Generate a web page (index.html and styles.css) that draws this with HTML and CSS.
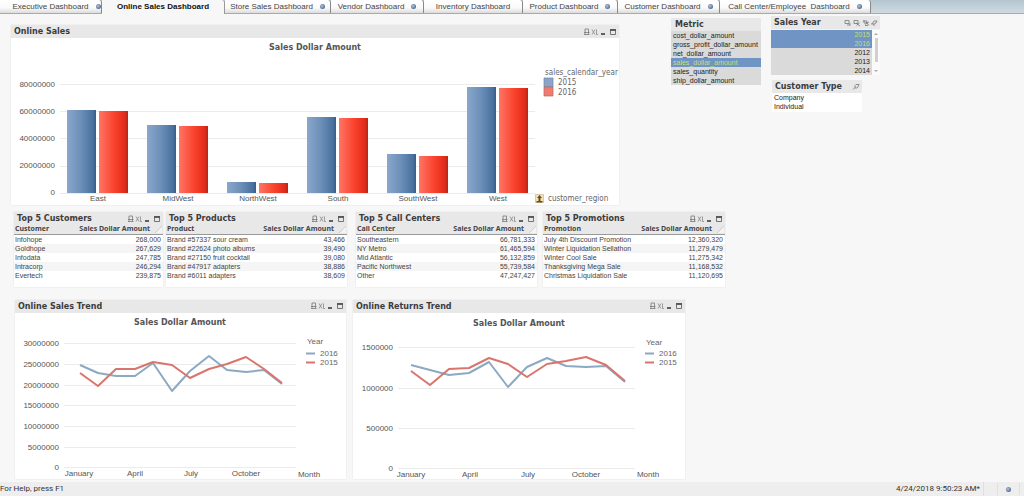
FILE: index.html
```
<!DOCTYPE html>
<html lang="en">
<head>
<meta charset="utf-8">
<title>Online Sales Dashboard</title>
<link rel="stylesheet" href="styles.css">
</head>
<body>
<svg class="sprite" aria-hidden="true">
  <symbol id="tools" viewBox="0 0 34 8">
    <path d="M2 4V1h3.500v3M1 4.500h5.500M1 6.500h5.500M2 4v2.500M5.500 4v2.500" fill="none" stroke="#777" stroke-width=".8"/>
    <path d="M9 1.500l3 5M12 1.500L9 6.500M13.500 1.500v5H15" fill="none" stroke="#888" stroke-width=".8"/>
    <path d="M18 6h4" stroke="#333" stroke-width="1.500"/>
    <path d="M27 2h6" stroke="#333" stroke-width="1.500"/>
    <path d="M27.500 1.500h5v5h-5z" fill="none" stroke="#555" stroke-width=".8"/>
  </symbol>
  <symbol id="search" viewBox="0 0 8 8">
    <path d="M1 6.500L3 4.500M3 2.500l1-1h3l-1 2.500-1.500 1H3z" fill="none" stroke="#777" stroke-width=".8"/>
  </symbol>
  <symbol id="yeartools" viewBox="0 0 34 8">
    <path d="M1 1.500h4v3H1zM3 6h3M6 4v2.500M10 1.500h4v3h-4zM12 4l4 3M12.500 6.500L15.500 4M19 2h4M20 1v3h3V2M21 5.500l4-2.500M22 3l3 3.500M21 6.500h3M28 5l2-3h3l-1 2-2 1h-3M29 6h2" fill="none" stroke="#777" stroke-width=".8"/>
  </symbol>
  <linearGradient id="blue"><stop offset="0" stop-color="#89a7cb"/><stop offset=".45" stop-color="#6e91ba"/><stop offset=".9" stop-color="#48719f"/><stop offset="1" stop-color="#3c5a80"/></linearGradient>
  <linearGradient id="red"><stop offset="0" stop-color="#ff7565"/><stop offset=".5" stop-color="#fa4530"/><stop offset=".9" stop-color="#e22a18"/><stop offset="1" stop-color="#a82c1c"/></linearGradient>
</svg>

<nav class="tabs" aria-label="Dashboards">
  <button class="tab">Executive Dashboard<i class="dot"></i></button>
  <button class="tab active" aria-current="page">Online Sales Dashboard</button>
  <button class="tab">Store Sales Dashboard<i class="dot"></i></button>
  <button class="tab">Vendor Dashboard<i class="dot"></i></button>
  <button class="tab">Inventory Dashboard</button>
  <button class="tab">Product Dashboard<i class="dot"></i></button>
  <button class="tab">Customer Dashboard<i class="dot"></i></button>
  <button class="tab">Call Center/Employee&nbsp; Dashboard<i class="dot"></i></button>
</nav>

<main>
  <div class="overview">
    <section class="panel sales">
      <header class="bar"><h2>Online Sales</h2><button class="tools" aria-label="Panel options"><svg><use href="#tools"/></svg></button></header>
      <svg class="chart" viewBox="11 38 608 167" role="img" aria-label="Sales dollar amount by region">
        <text class="heading" x="315" y="50">Sales Dollar Amount</text>
        <path class="grid" d="M60 84.500H535M60 111.500H535M60 138.500H535M60 166.500H535M60 193.500H535"/>
        <g class="axis end"><text x="55" y="87">80000000</text><text x="55" y="114">60000000</text><text x="55" y="141">40000000</text><text x="55" y="168">20000000</text><text x="55" y="195">0</text></g>
        <g fill="url(#blue)">
          <rect x="67" y="110" width="29" height="83"/><rect x="147" y="125" width="29" height="68"/><rect x="227" y="182" width="29" height="11"/><rect x="307" y="117" width="29" height="76"/><rect x="387" y="154" width="29" height="39"/><rect x="467" y="87" width="29" height="106"/>
        </g>
        <g fill="url(#red)">
          <rect x="99" y="111" width="29" height="82"/><rect x="179" y="126" width="29" height="67"/><rect x="259" y="183" width="29" height="10"/><rect x="339" y="118" width="29" height="75"/><rect x="419" y="156" width="29" height="37"/><rect x="499" y="88" width="29" height="105"/>
        </g>
        <g class="axis mid"><text x="98" y="201">East</text><text x="178" y="201">MidWest</text><text x="258" y="201">NorthWest</text><text x="338" y="201">South</text><text x="418" y="201">SouthWest</text><text x="498" y="201">West</text></g>
        <g class="legend"><text x="545" y="75">sales_calendar_year</text><text x="558" y="85">2015</text><text x="558" y="95">2016</text><text x="548" y="201">customer_region</text></g>
        <path d="M544 78h9v9h-9z" fill="#8aa5c9" stroke="#6f87a8" stroke-width=".7"/>
        <path d="M544 87h9v9h-9z" fill="#ee7c70" stroke="#c0665d" stroke-width=".7"/>
        <path d="M535.500 194.500h8v8h-8z" fill="#f2e3b8" stroke="#c9b98c" stroke-width=".7"/>
        <path d="M539.500 195l2.500 3h-1.500v3h2v1.500h-6V201h2v-3H537z" fill="#6b4c1c"/>
      </svg>
    </section>

    <section class="filter metric">
      <header class="bar"><h2>Metric</h2></header>
      <div class="options">
        <button>cost_dollar_amount</button><button>gross_profit_dollar_amount</button><button>net_dollar_amount</button><button class="picked" aria-pressed="true">sales_dollar_amount</button><button>sales_quantity</button><button>ship_dollar_amount</button>
      </div>
    </section>

    <div class="stack">
      <section class="filter year">
        <header class="bar"><h2>Sales Year</h2><button class="tools" aria-label="Selection options"><svg><use href="#yeartools"/></svg></button></header>
        <div class="scroller">
          <div class="options">
            <button class="picked" aria-pressed="true">2015</button><button class="picked" aria-pressed="true">2016</button><button>2012</button><button>2013</button><button>2014</button>
          </div>
          <div class="track"><i class="up"></i><i class="thumb"></i><i class="down"></i></div>
        </div>
      </section>
      <section class="filter type">
        <header class="bar"><h2>Customer Type</h2><button class="find" aria-label="Search"><svg><use href="#search"/></svg></button></header>
        <div class="options"><button>Company</button><button>Individual</button></div>
      </section>
    </div>
  </div>

  <div class="tops">
    <section class="panel">
      <header class="bar"><h2>Top 5 Customers</h2><button class="tools" aria-label="Panel options"><svg><use href="#tools"/></svg></button></header>
      <table>
        <thead><tr><th>Customer</th><th>Sales Dollar Amount</th></tr></thead>
        <tbody><tr><td>Infohope</td><td>268,000</td></tr><tr><td>Goldhope</td><td>267,629</td></tr><tr><td>Infodata</td><td>247,785</td></tr><tr><td>Intracorp</td><td>246,294</td></tr><tr><td>Evertech</td><td>239,875</td></tr></tbody>
      </table>
    </section>
    <section class="panel">
      <header class="bar"><h2>Top 5 Products</h2><button class="tools" aria-label="Panel options"><svg><use href="#tools"/></svg></button></header>
      <table>
        <thead><tr><th>Product</th><th>Sales Dollar Amount</th></tr></thead>
        <tbody><tr><td>Brand #57337 sour cream</td><td>43,466</td></tr><tr><td>Brand #22624 photo albums</td><td>39,490</td></tr><tr><td>Brand #27150 fruit cocktail</td><td>39,080</td></tr><tr><td>Brand #47917 adapters</td><td>38,886</td></tr><tr><td>Brand #6011 adapters</td><td>38,609</td></tr></tbody>
      </table>
    </section>
    <section class="panel centers">
      <header class="bar"><h2>Top 5 Call Centers</h2><button class="tools" aria-label="Panel options"><svg><use href="#tools"/></svg></button></header>
      <table>
        <thead><tr><th>Call Center</th><th>Sales Dollar Amount</th></tr></thead>
        <tbody><tr><td>Southeastern</td><td>66,781,333</td></tr><tr><td>NY Metro</td><td>61,465,594</td></tr><tr><td>Mid Atlantic</td><td>56,132,859</td></tr><tr><td>Pacific Northwest</td><td>55,739,584</td></tr><tr><td>Other</td><td>47,247,427</td></tr></tbody>
      </table>
    </section>
    <section class="panel promotions">
      <header class="bar"><h2>Top 5 Promotions</h2><button class="tools" aria-label="Panel options"><svg><use href="#tools"/></svg></button></header>
      <table>
        <thead><tr><th>Promotion</th><th>Sales Dollar Amount</th></tr></thead>
        <tbody><tr><td>July 4th Discount Promotion</td><td>12,360,320</td></tr><tr><td>Winter Liquidation Sellathon</td><td>11,279,479</td></tr><tr><td>Winter Cool Sale</td><td>11,275,342</td></tr><tr><td>Thanksgiving Mega Sale</td><td>11,168,532</td></tr><tr><td>Christmas Liquidation Sale</td><td>11,120,695</td></tr></tbody>
      </table>
    </section>
  </div>

  <div class="trends">
    <section class="panel">
      <header class="bar"><h2>Online Sales Trend</h2><button class="tools" aria-label="Panel options"><svg><use href="#tools"/></svg></button></header>
      <svg class="chart" viewBox="15 314 331 166" role="img" aria-label="Online sales by month">
        <text class="heading" x="180" y="326">Sales Dollar Amount</text>
        <path class="grid" d="M64 344.500H296M64 365.500H296M64 386.500H296M64 406.500H296M64 427.500H296M64 448.500H296M64 468.500H296"/>
        <g class="axis end"><text x="59" y="347">30000000</text><text x="59" y="368">25000000</text><text x="59" y="389">20000000</text><text x="59" y="409">15000000</text><text x="59" y="430">10000000</text><text x="59" y="451">5000000</text><text x="59" y="471">0</text></g>
        <polyline class="line y16" points="80,366 98,374 116,377 135,377 153,364 172,392 190,372 209,357 227,371 246,373 264,371 282,385"/>
        <polyline class="line y15" points="80,374 98,387 116,370 135,370 153,363 172,366 190,379 209,370 227,365 246,358 264,370 282,384"/>
        <g class="axis mid"><text x="79" y="477">January</text><text x="135" y="477">April</text><text x="191" y="477">July</text><text x="246" y="477">October</text><text x="309" y="478">Month</text></g>
        <g class="legend"><text x="307" y="345">Year</text><text x="320" y="357">2016</text><text x="320" y="366">2015</text></g>
        <path class="line y16" d="M306 354.500h9"/><path class="line y15" d="M306 363.500h9"/>
      </svg>
    </section>
    <section class="panel">
      <header class="bar"><h2>Online Returns Trend</h2><button class="tools" aria-label="Panel options"><svg><use href="#tools"/></svg></button></header>
      <svg class="chart" viewBox="353 314 332 166" role="img" aria-label="Online returns by month">
        <text class="heading" x="519" y="327">Sales Dollar Amount</text>
        <path class="grid" d="M398 348.500H635M398 389.500H635M398 429.500H635M398 469.500H635"/>
        <g class="axis end"><text x="393" y="351">1500000</text><text x="393" y="392">1000000</text><text x="393" y="432">500000</text><text x="393" y="472">0</text></g>
        <polyline class="line y16" points="411,366 430,371 449,376 469,374 489,363 508,388 527,368 547,359 566,367 586,368 606,367 625,383"/>
        <polyline class="line y15" points="411,372 430,386 449,370 469,369 489,359 508,365 527,378 547,365 566,362 586,358 606,366 625,382"/>
        <g class="axis mid"><text x="411" y="478">January</text><text x="470" y="478">April</text><text x="528" y="478">July</text><text x="586" y="478">October</text><text x="648" y="478">Month</text></g>
        <g class="legend"><text x="646" y="346">Year</text><text x="659" y="357">2016</text><text x="659" y="366">2015</text></g>
        <path class="line y16" d="M645 354.500h9"/><path class="line y15" d="M645 363.500h9"/>
      </svg>
    </section>
  </div>
</main>

<footer class="status">
  <span>For Help, press F1</span>
  <time>4/24/2018 9:50:23 AM*</time>
  <i class="cell"></i>
  <i class="cell lamp"><i class="dot"></i></i>
</footer>
</body>
</html>
```
FILE: styles.css
```
* { box-sizing: border-box; }

body {
  margin: 0;
  min-height: 100vh;
  display: flex;
  flex-direction: column;
  background: #f7f7f7;
  color: #444;
  font: 7px/9px "Liberation Sans", Arial, sans-serif;
}

button {
  margin: 0;
  padding: 0;
  border: 0;
  background: none;
  color: inherit;
  font: inherit;
}

h2 {
  margin: 0;
  color: #3c3c3c;
  font: bold 8px/13px "DejaVu Sans", sans-serif;
  white-space: nowrap;
}

.sprite { display: block; width: 0; height: 0; }

/* Tabs */
.tabs {
  display: grid;
  grid-template-columns: 102fr 123fr 106fr 93fr 99fr 95fr 102fr 151fr 153fr;
  height: 14px;
  background: linear-gradient(#b5c6d0, #cfdae0);
  border-bottom: 1px solid #aaa;
}

.tab {
  display: flex;
  align-items: center;
  justify-content: center;
  gap: 7px;
  height: 13px;
  border-right: 1px solid #888;
  border-radius: 0 3px 0 0;
  background: linear-gradient(#fff, #fafafa 60%, #dcdcdc);
  color: #444;
  font: 8px/12px "Liberation Sans", Arial, sans-serif;
  white-space: nowrap;
}

.tab:first-child { padding-left: 12px; }

.tab.active {
  height: 14px;
  border-right-color: #999;
  background: #f7f7f7;
  color: #111;
  font-weight: bold;
}

.dot {
  width: 5px;
  height: 5px;
  border-radius: 50%;
  background: radial-gradient(circle at 40% 40%, #b5c7de, #536b91 70%);
}

main { flex: 1; }

/* Panels */
.bar {
  display: flex;
  align-items: center;
  justify-content: space-between;
  height: 13px;
  padding: 0 2px 0 3px;
  background: #e8e8e8;
}

.panel { background: #fff; box-shadow: 0 0 1px #ccc; }
.tools, .find { height: 8px; }
.tools svg { display: block; width: 34px; height: 8px; }
.find svg { display: block; width: 8px; height: 8px; }
.chart { display: block; width: 100%; height: auto; }

.overview {
  display: grid;
  grid-template-columns: minmax(0, 650fr) minmax(0, 90fr) minmax(0, 109fr) minmax(0, 134fr);
  column-gap: 10px;
  align-items: start;
  padding: 2px 0 0 11px;
}

.sales { margin: 9px 42px 0 0; }
.metric { margin-top: 2px; }

/* Filters */
.options { display: flex; flex-direction: column; background: #dadada; }
.options button { padding: 0 2px; height: 9px; color: #222; text-align: left; white-space: nowrap; }
.options .picked { background: #7095c5; color: #c3dc7c; }
.metric .bar { padding-left: 4px; }
.scroller { display: flex; padding-top: 1px; background: #f3f3f3; }
.year .options { flex: 1; }
.year .options button { text-align: right; }
.track {
  display: flex;
  flex-direction: column;
  align-items: center;
  justify-content: space-between;
  width: 8px;
  padding: 3px 0;
  background: #fafafa;
}
.thumb { width: 3px; flex: 1; margin: 3px 0 8px; background: #d0d0d0; }
.up, .down { border: 2px solid transparent; }
.up { border-top: 0; border-bottom: 2px solid #aaa; }
.down { border-bottom: 0; border-top: 2px solid #aaa; }
.type { margin: 5px 18px 0 1px; }
.type .options { background: #fff; padding-bottom: 1px; }

/* Tables */
.tops {
  display: grid;
  grid-template-columns: 149fr 181fr 187fr 185fr 296fr;
  column-gap: 3px;
  margin-top: 7px;
  padding-left: 14px;
}

.tops .panel { padding-bottom: 7px; }
.tops .centers { margin-left: 6px; }
.tops .promotions { margin-left: 3px; }
table { width: 100%; border-collapse: collapse; }
th, td { height: 9px; padding: 0 2px 0 1px; text-align: left; white-space: nowrap; }
th {
  border-bottom: 1px solid #999;
  background: #e8e8e8;
  color: #444;
  font-family: "Noto Sans", "Open Sans", sans-serif;
  line-height: 8px;
}
th:last-child {
  padding-right: 13px;
  background: linear-gradient(135deg, #e8e8e8 46%, #c4c4c4 48%, #f4f4f4 58%) no-repeat right 1px top 1px / 7px 7px #e8e8e8;
  text-align: right;
}
td:last-child { text-align: right; }
tbody tr:nth-child(even) { background: #f5f5f5; }

/* Trends */
.trends {
  display: grid;
  grid-template-columns: 331fr 332fr 332fr;
  column-gap: 7px;
  margin-top: 13px;
  padding-left: 15px;
}

/* Charts */
.heading {
  fill: #555;
  font: bold 8px "DejaVu Sans", sans-serif;
  text-anchor: middle;
}

.axis { fill: #555; font: 8px "Liberation Sans", Arial, sans-serif; }
.end { text-anchor: end; }
.mid { text-anchor: middle; }
.legend { fill: #666; font: 8px "DejaVu Sans Condensed", "DejaVu Sans", sans-serif; }
.trends .legend { font-family: "Liberation Sans", Arial, sans-serif; }
.grid { stroke: #ebebeb; }
.line { fill: none; stroke-width: 2px; stroke-linejoin: round; }
.y16 { stroke: #8ca9c3; }
.y15 { stroke: #d9756d; }

/* Status bar */
.status {
  display: flex;
  align-items: center;
  height: 14px;
  background: #eee;
  font: 8px/14px Roboto, sans-serif;
  color: #333;
}

.status time { margin-left: auto; padding-right: 3px; border-right: 1px solid #e0e0e0; }
.cell { width: 14px; height: 12px; border-right: 1px solid #e0e0e0; }
.lamp { display: flex; align-items: center; justify-content: center; width: 22px; margin-right: 4px; }
```
